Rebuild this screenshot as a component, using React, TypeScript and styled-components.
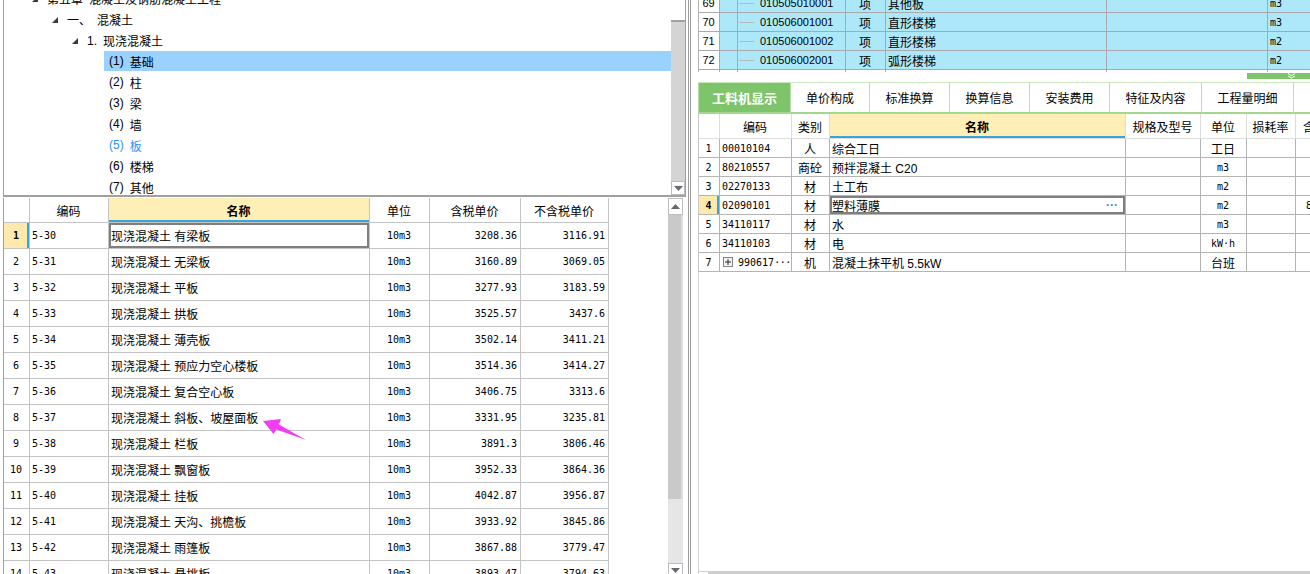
import React from 'react';
import styled, { createGlobalStyle } from 'styled-components';

const CJK = `"Liberation Sans", "Noto Sans CJK SC", sans-serif`;
const MONO = `"DejaVu Sans Mono", "Noto Sans CJK SC", monospace`;

type Tone = 'plain' | 'head' | 'pick' | 'bill';
type Face = 'cjk' | 'mono' | 'sans';

const TONES: Record<Tone, string> = {
  plain: '#ffffff',
  head: '#ffeeb5',
  pick: '#ffe9ad',
  bill: '#ade8fa'
};

const treeItems = [
  { level: 0, num: '第五章', label: '混凝土及钢筋混凝土工程' },
  { level: 1, num: '一、', label: '混凝土' },
  { level: 2, num: '1.', label: '现浇混凝土' },
  { level: 3, num: '(1)', label: '基础', selected: true },
  { level: 3, num: '(2)', label: '柱' },
  { level: 3, num: '(3)', label: '梁' },
  { level: 3, num: '(4)', label: '墙' },
  { level: 3, num: '(5)', label: '板', active: true },
  { level: 3, num: '(6)', label: '楼梯' },
  { level: 3, num: '(7)', label: '其他' }
];

const quotaRows = [
  ['5-30', '现浇混凝土 有梁板', '3208.36', '3116.91'],
  ['5-31', '现浇混凝土 无梁板', '3160.89', '3069.05'],
  ['5-32', '现浇混凝土 平板', '3277.93', '3183.59'],
  ['5-33', '现浇混凝土 拱板', '3525.57', '3437.6'],
  ['5-34', '现浇混凝土 薄壳板', '3502.14', '3411.21'],
  ['5-35', '现浇混凝土 预应力空心楼板', '3514.36', '3414.27'],
  ['5-36', '现浇混凝土 复合空心板', '3406.75', '3313.6'],
  ['5-37', '现浇混凝土 斜板、坡屋面板', '3331.95', '3235.81'],
  ['5-38', '现浇混凝土 栏板', '3891.3', '3806.46'],
  ['5-39', '现浇混凝土 飘窗板', '3952.33', '3864.36'],
  ['5-40', '现浇混凝土 挂板', '4042.87', '3956.87'],
  ['5-41', '现浇混凝土 天沟、挑檐板', '3933.92', '3845.86'],
  ['5-42', '现浇混凝土 雨篷板', '3867.88', '3779.47'],
  ['5-43', '现浇混凝土 悬挑板', '3893.47', '3794.63']
];

const billRows = [
  { no: '69', code: '010505010001', kind: '项', name: '其他板', unit: 'm3' },
  { no: '70', code: '010506001001', kind: '项', name: '直形楼梯', unit: 'm3' },
  { no: '71', code: '010506001002', kind: '项', name: '直形楼梯', unit: 'm2' },
  { no: '72', code: '010506002001', kind: '项', name: '弧形楼梯', unit: 'm2' }
];

const tabs = [
  { label: '工料机显示', width: 92 },
  { label: '单价构成', width: 79 },
  { label: '标准换算', width: 80 },
  { label: '换算信息', width: 80 },
  { label: '安装费用', width: 80 },
  { label: '特征及内容', width: 92 },
  { label: '工程量明细', width: 92 },
  { label: '说明信息', width: 92 }
];

const resRows = [
  { no: '1', code: '00010104', kind: '人', name: '综合工日', unit: '工日' },
  { no: '2', code: '80210557', kind: '商砼', name: '预拌混凝土 C20', unit: 'm3' },
  { no: '3', code: '02270133', kind: '材', name: '土工布', unit: 'm2' },
  { no: '4', code: '02090101', kind: '材', name: '塑料薄膜', unit: 'm2', picked: true, qty: '8.5' },
  { no: '5', code: '34110117', kind: '材', name: '水', unit: 'm3' },
  { no: '6', code: '34110103', kind: '材', name: '电', unit: 'kW·h' },
  { no: '7', code: '990617', kind: '机', name: '混凝土抹平机 5.5kW', unit: '台班', group: true }
];

const isAscii = (s: string) => /^[\x20-\x7e·]+$/.test(s);

const ArrowIcon = ({ dir }: { dir: 'up' | 'down' }) => (
  <svg width="9" height="5" viewBox="0 0 9 5">
    <polygon points={dir === 'up' ? '4.5,0 9,5 0,5' : '0,0 9,0 4.5,5'} fill="#676774" />
  </svg>
);

const App = () => {
  return (
    <>
      <GlobalStyle />
      <Screen>
        <LeftPane>
          <TreePanel>
            <TreeBody>
              <TreeList>
                {treeItems.map((item) => {
                  const leaf = item.level === 3;
                  return (
                    <TreeRow key={item.label} $indent={leaf ? 100 : 28 + item.level * 20}>
                      {!leaf && (
                        <Toggle viewBox="0 0 6 6">
                          <polygon points="6,0 6,6 0,6" fill="#3a3a3a" />
                        </Toggle>
                      )}
                      <TreeLabel $leaf={leaf} $selected={item.selected} $active={item.active}>
                        <TreeNum>{item.num}</TreeNum>
                        {item.label}
                      </TreeLabel>
                    </TreeRow>
                  );
                })}
              </TreeList>
            </TreeBody>
            <ScrollBar $width={14} $track="#d4d4d4">
              <TreeThumb />
              <ScrollSpace />
              <ScrollButton $height={14}>
                <ArrowIcon dir="down" />
              </ScrollButton>
            </ScrollBar>
          </TreePanel>

          <GridPanel>
            <QuotaFrame>
              <QuotaRow $head>
                <Cell $tone="plain" />
                <Cell $align="center">编码</Cell>
                <Cell $align="center" $tone="head" $edge="bottom" $bold>
                  名称
                </Cell>
                <Cell $align="center">单位</Cell>
                <Cell $align="center">含税单价</Cell>
                <Cell $align="center">不含税单价</Cell>
              </QuotaRow>
              {quotaRows.map(([code, name, taxed, net], i) => (
                <QuotaRow key={code}>
                  <Cell
                    $align="center"
                    $face="mono"
                    $tone={i === 0 ? 'pick' : 'plain'}
                    $edge={i === 0 ? 'right' : undefined}
                    $bold={i === 0}
                  >
                    {i + 1}
                  </Cell>
                  <Cell $face="mono">{code}</Cell>
                  <Cell $focus={i === 0}>{name}</Cell>
                  <Cell $align="center" $face="mono">
                    10m3
                  </Cell>
                  <Cell $align="right" $face="mono">
                    {taxed}
                  </Cell>
                  <Cell $align="right" $face="mono">
                    {net}
                  </Cell>
                </QuotaRow>
              ))}
            </QuotaFrame>
            <ScrollBar $width={15} $track="#e6e6e6" $gap={5}>
              <ScrollButton $height={17}>
                <ArrowIcon dir="up" />
              </ScrollButton>
              <ScrollThumb $height={284} />
              <ScrollSpace />
              <ScrollButton $height={14}>
                <ArrowIcon dir="down" />
              </ScrollButton>
            </ScrollBar>
          </GridPanel>

          <PinkArrow viewBox="0 0 48 30">
            <polygon
              points="3,9 21,7 19,12.5 46,28 16.5,17.5 13.5,22"
              fill="#f23ef2"
            />
          </PinkArrow>
        </LeftPane>

        <Splitter />

        <RightPane>
          <BillFrame>
            <BillList>
              {billRows.map((row) => (
                <BillRow key={row.no}>
                  <Cell $align="center" $face="sans">
                    {row.no}
                  </Cell>
                  <Cell $tone="bill" />
                  <Cell $tone="bill" $face="sans">
                    <Connector />
                    {row.code}
                  </Cell>
                  <Cell $tone="bill" $align="center">
                    {row.kind}
                  </Cell>
                  <Cell $tone="bill">{row.name}</Cell>
                  <Cell $tone="bill" />
                  <Cell $tone="bill" $face="mono">
                    {row.unit}
                  </Cell>
                </BillRow>
              ))}
              <BillRow>
                <Cell />
                <Cell />
                <Cell />
                <Cell />
                <Cell />
                <Cell />
                <Cell />
              </BillRow>
            </BillList>
          </BillFrame>

          <CollapseStrip>
            <CollapseHandle>
              <svg width="9" height="6" viewBox="0 0 9 6">
                <polyline points="1,0.5 4.5,2.5 8,0.5" fill="none" stroke="#fff" strokeWidth="1" />
                <polyline points="1,3 4.5,5 8,3" fill="none" stroke="#fff" strokeWidth="1" />
              </svg>
            </CollapseHandle>
          </CollapseStrip>

          <TabBar>
            {tabs.map((tab, i) => (
              <Tab key={tab.label} $width={tab.width} $active={i === 0}>
                {tab.label}
              </Tab>
            ))}
          </TabBar>

          <ResFrame>
            <ResRow $head>
              <Cell />
              <Cell $align="center">编码</Cell>
              <Cell $align="center">类别</Cell>
              <Cell $align="center" $tone="head" $edge="bottom" $bold>
                名称
              </Cell>
              <Cell $align="center">规格及型号</Cell>
              <Cell $align="center">单位</Cell>
              <Cell $align="center">损耗率</Cell>
              <Cell $align="center">含量</Cell>
            </ResRow>
            {resRows.map((row) => (
              <ResRow key={row.no}>
                <Cell
                  $align="center"
                  $face="mono"
                  $tone={row.picked ? 'pick' : 'plain'}
                  $edge={row.picked ? 'right' : undefined}
                  $bold={row.picked}
                >
                  {row.no}
                </Cell>
                <Cell $face="mono">
                  {row.group && (
                    <PlusBox viewBox="0 0 10 10">
                      <rect x="0.5" y="0.5" width="9" height="9" fill="#f4f4f4" stroke="#808080" />
                      <line x1="2" y1="5" x2="8" y2="5" stroke="#222" />
                      <line x1="5" y1="2" x2="5" y2="8" stroke="#222" />
                    </PlusBox>
                  )}
                  {row.code}
                  {row.group && <Ellipsis>···</Ellipsis>}
                </Cell>
                <Cell $align="center">{row.kind}</Cell>
                <Cell $focus={row.picked}>
                  {row.name}
                  {row.picked && <MoreDots>···</MoreDots>}
                </Cell>
                <Cell />
                <Cell $align="center" $face={isAscii(row.unit) ? 'mono' : 'cjk'}>
                  {row.unit}
                </Cell>
                <Cell />
                <Cell $align="center" $face="mono">
                  {row.qty}
                </Cell>
              </ResRow>
            ))}
          </ResFrame>

          <Filler />

          <HScroll>
            <HScrollButton />
            <HScrollThumb />
          </HScroll>
        </RightPane>
      </Screen>
    </>
  );
};

export default App;

const GlobalStyle = createGlobalStyle`
  * {
    box-sizing: border-box;
  }
  html,
  body {
    margin: 0;
    padding: 0;
    background: #ffffff;
  }
  body {
    font-family: ${CJK};
    font-size: 12px;
    color: #000000;
  }
`;

const Screen = styled.div`
  display: flex;
  width: 1310px;
  height: 574px;
  overflow: hidden;
  background: #ffffff;
`;

/* 左侧：定额树 + 定额列表 */
const LeftPane = styled.div`
  position: relative;
  display: flex;
  flex-direction: column;
  flex: none;
  width: 688px;
  height: 577px;
  padding-left: 3px;
`;
const TreePanel = styled.div`
  display: flex;
  flex: none;
  height: 197px;
  margin-right: 2px;
  border-left: 1px solid #a0a0a0;
  border-right: 1px solid #a0a0a0;
  border-bottom: 2px solid #a0a0a0;
`;
const TreeBody = styled.div`
  flex: 1;
  overflow: hidden;
`;
const TreeList = styled.div`
  margin-top: -12px;
`;
const TreeRow = styled.div<{ $indent: number }>`
  display: flex;
  align-items: center;
  height: 21px;
  padding-left: ${(p) => p.$indent}px;
  white-space: nowrap;
`;
const Toggle = styled.svg`
  flex: none;
  width: 6px;
  height: 6px;
  margin-right: 9px;
`;
const TreeLabel = styled.div<{ $leaf?: boolean; $selected?: boolean; $active?: boolean }>`
  display: flex;
  align-items: center;
  align-self: ${(p) => (p.$leaf ? 'flex-start' : 'center')};
  flex: ${(p) => (p.$leaf ? 1 : 'none')};
  height: ${(p) => (p.$leaf ? '20px' : '21px')};
  padding-left: ${(p) => (p.$leaf ? '5px' : '0')};
  background: ${(p) => (p.$selected ? '#99d1ff' : 'transparent')};
  color: ${(p) => (p.$active ? '#2a93ff' : '#000000')};
  font-size: 12px;
`;
const TreeNum = styled.span`
  margin-right: 6px;
`;
const TreeThumb = styled.div`
  flex: none;
  height: 22px;
  background: #ffffff;
  border-bottom: 2px solid #a0a0a0;
`;

const ScrollBar = styled.div<{ $width: number; $track: string; $gap?: number }>`
  display: flex;
  flex-direction: column;
  flex: none;
  width: ${(p) => p.$width}px;
  margin-right: ${(p) => p.$gap ?? 0}px;
  background: ${(p) => p.$track};
`;
const ScrollButton = styled.div<{ $height: number }>`
  display: flex;
  align-items: center;
  justify-content: center;
  flex: none;
  height: ${(p) => p.$height}px;
  background: #ffffff;
  border: 1px solid #bdbdbd;
`;
const ScrollThumb = styled.div<{ $height: number }>`
  flex: none;
  height: ${(p) => p.$height}px;
  background: #c9c9c9;
  border-right: 2px solid #dedede;
`;
const ScrollSpace = styled.div`
  flex: 1;
`;

const GridPanel = styled.div`
  display: flex;
  flex: 1;
  min-height: 0;
  margin-top: 1px;
`;
const QuotaFrame = styled.div`
  --line: #c4c4c4;
  flex: 1;
  overflow: hidden;
  border-left: 1px solid #a0a0a0;
`;
const QuotaRow = styled.div<{ $head?: boolean }>`
  display: grid;
  grid-template-columns: 26px 79px 261px 60px 91px 88px;
  width: max-content;
  height: ${(p) => (p.$head ? '25px' : '26px')};
`;

type CellProps = {
  $align?: 'left' | 'center' | 'right';
  $face?: Face;
  $tone?: Tone;
  $edge?: 'bottom' | 'right';
  $focus?: boolean;
  $bold?: boolean;
};

const cellShadow = (p: CellProps) => {
  const parts: string[] = [];
  if (p.$focus) parts.push('inset 0 0 0 2px #7f7f7f');
  if (p.$edge === 'bottom') parts.push('inset 0 -2px 0 #3ba3d6');
  if (p.$edge === 'right') parts.push('inset -2px 0 0 #3ba3d6');
  return parts.length ? parts.join(', ') : 'none';
};

const Cell = styled.div<CellProps>`
  display: flex;
  align-items: center;
  justify-content: ${(p) =>
    p.$align === 'right' ? 'flex-end' : p.$align === 'center' ? 'center' : 'flex-start'};
  min-width: 0;
  padding: 0 3px 0 2px;
  border-right: 1px solid var(--line);
  border-bottom: 1px solid var(--line);
  background: ${(p) => TONES[p.$tone ?? 'plain']};
  box-shadow: ${(p) => cellShadow(p)};
  font-family: ${(p) =>
    p.$face === 'mono' ? MONO : p.$face === 'sans' ? `"Liberation Sans", sans-serif` : CJK};
  font-size: ${(p) => (p.$face === 'mono' ? '10px' : p.$face === 'sans' ? '11px' : '12px')};
  font-weight: ${(p) => (p.$bold ? 'bold' : 'normal')};
  white-space: nowrap;
  overflow: hidden;
`;

const PinkArrow = styled.svg`
  position: absolute;
  left: 260px;
  top: 412px;
  width: 48px;
  height: 30px;
  pointer-events: none;
`;

const Splitter = styled.div`
  flex: none;
  width: 3px;
  border-left: 1px solid #9a9a9a;
  border-right: 1px solid #9a9a9a;
`;

/* 右侧：清单 + 工料机 */
const RightPane = styled.div`
  display: flex;
  flex-direction: column;
  flex: 1;
  min-width: 0;
  height: 585px;
  padding-left: 7px;
`;
const BillFrame = styled.div`
  --line: #a9a9a9;
  flex: none;
  height: 72px;
  overflow: hidden;
  border-left: 1px solid #b4b4b4;
`;
const BillList = styled.div`
  margin-top: -6px;
`;
const BillRow = styled.div`
  display: grid;
  grid-template-columns: 21px 18px 108px 40px 221px 161px 60px;
  width: max-content;
  height: 19px;
`;
const Connector = styled.span`
  flex: none;
  width: 15px;
  height: 1px;
  margin: 0 6px 0 -1px;
  background: #b9b9b9;
`;
const CollapseStrip = styled.div`
  display: flex;
  justify-content: flex-end;
  align-items: flex-start;
  flex: none;
  height: 10px;
  padding-top: 1px;
`;
const CollapseHandle = styled.div`
  display: flex;
  justify-content: flex-end;
  width: 63px;
  height: 6px;
  padding-right: 14px;
  background: #7dc46b;
`;
const TabBar = styled.div`
  display: flex;
  flex: none;
  height: 32px;
  overflow: hidden;
  border-top: 1px solid #cbe9bf;
  border-left: 1px solid #b8e0a8;
  border-bottom: 2px solid #a5d88f;
`;
const Tab = styled.div<{ $width: number; $active?: boolean }>`
  display: flex;
  align-items: center;
  justify-content: center;
  flex: none;
  width: ${(p) => p.$width}px;
  border-right: 1px solid #b8e0a8;
  background: ${(p) => (p.$active ? '#7dc46b' : '#ffffff')};
  color: ${(p) => (p.$active ? '#ffffff' : '#000000')};
  font-size: ${(p) => (p.$active ? '13px' : '12px')};
  font-weight: ${(p) => (p.$active ? 'bold' : 'normal')};
  white-space: nowrap;
`;
const ResFrame = styled.div`
  flex: none;
  overflow: hidden;
  border-left: 1px solid #c8c8c8;
`;
const ResRow = styled.div<{ $head?: boolean }>`
  --line: ${(p) => (p.$head ? '#dcdcdc' : '#b4b4b4')};
  display: grid;
  grid-template-columns: 21px 72px 38px 296px 75px 46px 49px 40px;
  width: max-content;
  height: ${(p) => (p.$head ? '25px' : '19px')};
`;
const PlusBox = styled.svg`
  flex: none;
  width: 10px;
  height: 10px;
  margin: 0 5px 0 1px;
`;
const Ellipsis = styled.span`
  letter-spacing: -0.5px;
`;
const MoreDots = styled.span`
  margin-left: auto;
  padding-right: 4px;
  color: #3b8fd8;
  font-weight: bold;
  letter-spacing: 0;
`;
const Filler = styled.div`
  flex: 1;
  border-left: 1px solid #d6d6d6;
`;
const HScroll = styled.div`
  display: flex;
  flex: none;
  height: 14px;
`;
const HScrollButton = styled.div`
  flex: none;
  width: 11px;
  background: #ffffff;
  border: 1px solid #cfcfcf;
`;
const HScrollThumb = styled.div`
  flex: 1;
  background: #cdcdcd;
`;
